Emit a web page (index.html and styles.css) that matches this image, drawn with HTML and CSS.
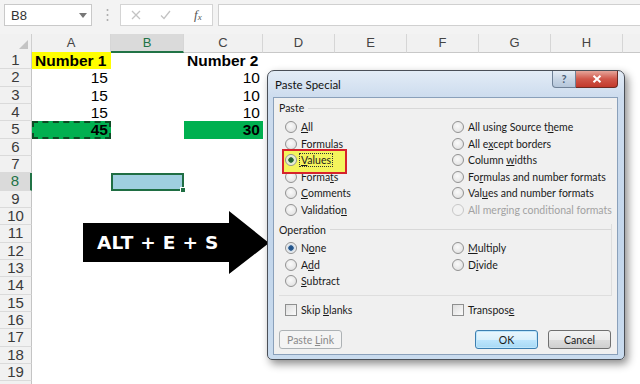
FILE: index.html
```html
<!DOCTYPE html>
<html>
<head>
<meta charset="utf-8">
<title>Paste Special</title>
<link rel="stylesheet" href="styles.css">
</head>
<body>
<div class="app">
  <div class="fbar">
    <div class="namebox"><span>B8</span><svg class="dd" width="8" height="5" viewBox="0 0 8 5"><path d="M0 0h8L4 5z" fill="#777"/></svg></div>
    <div class="grip"><svg width="3" height="14" viewBox="0 0 3 14"><circle cx="1.5" cy="2" r="1" fill="#aaa"/><circle cx="1.5" cy="7" r="1" fill="#aaa"/><circle cx="1.5" cy="12" r="1" fill="#aaa"/></svg></div>
    <div class="fxbox">
      <svg class="ic-x" width="10" height="10" viewBox="0 0 10 10"><path d="M1 1L9 9M9 1L1 9" stroke="#c3c3c3" stroke-width="1.3"/></svg>
      <svg class="ic-ok" width="11" height="10" viewBox="0 0 11 10"><path d="M1 5.5L4 8.5L10 1" stroke="#c3c3c3" stroke-width="1.3" fill="none"/></svg>
      <span class="fx">f<sub>x</sub></span>
    </div>
    <div class="finput"></div>
  </div>

  <div class="sheet">
    <div class="row hdr">
      <div class="corner"><svg width="9" height="9" viewBox="0 0 9 9"><path d="M9 0V9H0z" fill="#c4c4c4"/></svg></div>
      <div class="ch">A</div><div class="ch sel">B</div><div class="ch">C</div><div class="ch">D</div><div class="ch">E</div><div class="ch">F</div><div class="ch">G</div><div class="ch">H</div><div class="ch last"></div>
    </div>
    <div class="row"><div class="rh">1</div><div class="c ca b yellow">Number 1</div><div class="c cc b">Number 2</div></div>
    <div class="row"><div class="rh">2</div><div class="c ca r">15</div><div class="c cc r">10</div></div>
    <div class="row"><div class="rh">3</div><div class="c ca r">15</div><div class="c cc r">10</div></div>
    <div class="row"><div class="rh">4</div><div class="c ca r">15</div><div class="c cc r">10</div></div>
    <div class="row"><div class="rh">5</div><div class="c ca r b green ants">45</div><div class="c cc r b green">30</div></div>
    <div class="row"><div class="rh">6</div></div>
    <div class="row"><div class="rh">7</div></div>
    <div class="row"><div class="rh sel">8</div><div class="c cb active"><span class="handle"></span></div></div>
    <div class="row"><div class="rh">9</div></div>
    <div class="row"><div class="rh">10</div></div>
    <div class="row"><div class="rh">11</div></div>
    <div class="row"><div class="rh">12</div></div>
    <div class="row"><div class="rh">13</div></div>
    <div class="row"><div class="rh">14</div></div>
    <div class="row"><div class="rh">15</div></div>
    <div class="row"><div class="rh">16</div></div>
    <div class="row"><div class="rh">17</div></div>
    <div class="row"><div class="rh">18</div></div>
    <div class="row"><div class="rh">19</div></div>
    <div class="row"><div class="rh"></div></div>
  </div>

  <div class="arrow">
    <svg class="arrow-shape" width="186" height="63" viewBox="0 0 186 63"><path d="M0 12H146V0L186 32L146 63V51H0z" fill="#000"/></svg>
    <span class="arrow-text">ALT + E + S</span>
  </div>

  <div class="dlg">
    <div class="titlebar">
      <span class="ttl">Paste Special</span>
      <div class="tbtns">
        <div class="tb-help">?</div>
        <div class="tb-close"><svg width="10" height="8" viewBox="0 0 10 8"><path d="M1.5 0.8L8.5 7.2M8.5 0.8L1.5 7.2" stroke="#fff" stroke-width="2"/></svg></div>
      </div>
    </div>
    <div class="client">
      <div class="gh"><span>Paste</span><i class="gl"></i></div>
      <div class="opts six">
        <label class="opt"><span class="rad"></span><span><u>A</u>ll</span></label>
        <label class="opt"><span class="rad"></span><span>All using Source t<u>h</u>eme</span></label>
        <label class="opt"><span class="rad"></span><span><u>F</u>ormulas</span></label>
        <label class="opt"><span class="rad"></span><span>All e<u>x</u>cept borders</span></label>
        <label class="opt hl"><span class="rad on green-dot"></span><span class="focus"><u>V</u>alues</span></label>
        <label class="opt"><span class="rad"></span><span>Column <u>w</u>idths</span></label>
        <label class="opt"><span class="rad"></span><span>Forma<u>t</u>s</span></label>
        <label class="opt"><span class="rad"></span><span>Fo<u>r</u>mulas and number formats</span></label>
        <label class="opt"><span class="rad"></span><span><u>C</u>omments</span></label>
        <label class="opt"><span class="rad"></span><span>Val<u>u</u>es and number formats</span></label>
        <label class="opt"><span class="rad"></span><span>Validatio<u>n</u></span></label>
        <label class="opt dis"><span class="rad"></span><span>All mer<u>g</u>ing conditional formats</span></label>
      </div>
      <div class="opgrp">
        <div class="gh"><span>Operation</span><i class="gl"></i></div>
        <div class="opts three">
          <label class="opt"><span class="rad on"></span><span>N<u>o</u>ne</span></label>
          <label class="opt"><span class="rad"></span><span><u>M</u>ultiply</span></label>
          <label class="opt"><span class="rad"></span><span>A<u>d</u>d</span></label>
          <label class="opt"><span class="rad"></span><span>D<u>i</u>vide</span></label>
          <label class="opt"><span class="rad"></span><span><u>S</u>ubtract</span></label>
        </div>
      </div>
      <div class="opts checks">
        <label class="opt"><span class="chk"></span><span>Skip <u>b</u>lanks</span></label>
        <label class="opt"><span class="chk"></span><span>Transpos<u>e</u></span></label>
      </div>
      <div class="btns">
        <button class="btn disabled">Paste <u>L</u>ink</button>
        <button class="btn default">OK</button>
        <button class="btn">Cancel</button>
      </div>
    </div>
  </div>
</div>
</body>
</html>
```

FILE: styles.css
```css
* { box-sizing: border-box; margin: 0; padding: 0; }
html, body { width: 640px; height: 384px; overflow: hidden; background: #fff; }
body { font-family: "Liberation Sans", Arial, sans-serif; color: #000; }
.app { position: relative; width: 640px; height: 384px; overflow: hidden; }

/* formula bar */
.fbar { height: 34px; background: #f3f3f3; display: flex; align-items: flex-start; padding: 4px 0 0 4px; }
.namebox { width: 88px; height: 22px; background: #fff; border: 1px solid #c9c9c9; display: flex; align-items: center; justify-content: space-between; padding: 0 4px 0 6px; font-size: 13px; color: #333; }
.grip { width: 28px; height: 22px; display: flex; align-items: center; justify-content: center; padding-left: 2px; }
.fxbox { width: 93px; height: 22px; background: #fff; border: 1px solid #d4d4d4; display: flex; align-items: center; padding-left: 10px; }
.ic-x { margin-right: 19px; }
.ic-ok { margin-right: 23px; }
.fx { font-family: "Liberation Serif", serif; font-style: italic; font-size: 13px; color: #555; }
.fx sub { font-size: 9px; vertical-align: -1px; }
.finput { flex: 1; height: 22px; background: #fff; border: 1px solid #d0d0d0; border-right: none; margin-left: 5px; }

/* sheet */
.sheet { display: flex; flex-direction: column; }
.row { display: grid; grid-template-columns: 32px 79px 73px 79px 72px 72px 72px 72px 72px 1fr; height: 17.33px; }
.row.hdr { height: 18px; }
.corner { background: #f1f1f1; border-right: 1px solid #cfcfcf; border-bottom: 1px solid #c8c8c8; display: flex; align-items: flex-end; justify-content: flex-end; padding: 0 3px 3px 0; }
.ch { background: #f1f1f1; border-right: 1px solid #d6d6d6; border-bottom: 1px solid #c8c8c8; font-size: 13px; line-height: 17px; text-align: center; color: #444; }
.ch.sel { background: #dadada; border-bottom: 2px solid #217346; color: #217346; }
.ch.last { border-right: none; }
.rh { grid-column: 1; background: #f1f1f1; border-right: 1px solid #c4c4c4; border-bottom: 1px solid #dadada; font-size: 15px; line-height: 16px; text-align: center; color: #3a3a3a; }
.rh.sel { background: #dadada; border-right: 2px solid #217346; color: #217346; }
.c { font-size: 15.5px; line-height: 17px; padding: 0 3px; white-space: nowrap; }
.ca { grid-column: 2; }
.cb { grid-column: 3; }
.cc { grid-column: 4; }
.r { text-align: right; }
.b { font-weight: bold; }
.yellow { background: #ffff00; }
.green { background: #00b050; }
.ants { border: 2px dashed #0d4a24; line-height: 13px; padding-right: 1px; }
.active { background: #9fcfe0; border: 2px solid #1f6e43; position: relative; }
.handle { position: absolute; right: -4px; bottom: -4px; width: 6px; height: 6px; background: #1f6e43; border: 1px solid #fff; }

/* arrow */
.arrow { position: absolute; left: 83px; top: 211px; width: 186px; height: 63px; }
.arrow-shape { display: block; }
.arrow-text { position: absolute; left: 14px; top: 21px; font-family: "DejaVu Sans", Verdana, sans-serif; font-weight: bold; font-size: 18.5px; letter-spacing: 0.3px; line-height: 22px; color: #fff; white-space: nowrap; }

/* dialog */
.dlg { position: absolute; left: 267px; top: 70px; width: 358px; height: 290px; border: 1px solid #4a4f57; border-radius: 7px 7px 5px 5px; background: linear-gradient(#e3ecf6, #cddcee 26px, #c3d6eb 60%, #c9dbee); box-shadow: 3px 4px 8px rgba(0,0,0,.45); padding: 0 6px 4px 5px; display: flex; flex-direction: column; font-family: Lato, "Open Sans", sans-serif; }
.titlebar { height: 26px; display: flex; justify-content: space-between; align-items: flex-start; }
.ttl { font-size: 11.5px; line-height: 14px; padding: 7px 0 0 2px; color: #111; }
.tbtns { display: flex; }
.tb-help { width: 24px; height: 17px; border: 1px solid #6f8197; border-top: none; border-radius: 0 0 0 4px; background: linear-gradient(#e4ecf5, #c6d4e4 55%, #b5c6da); color: #4b5d74; font-size: 11px; font-weight: bold; text-align: center; line-height: 15px; }
.tb-close { width: 42px; height: 17px; border: 1px solid #6d2a22; border-left: none; border-top: none; border-radius: 0 0 4px 0; background: linear-gradient(#e6a59a, #d0574a 50%, #c2392b); display: flex; align-items: center; justify-content: center; }
.client { flex: 1; background: #f0f0f0; border: 1px solid #8aa0ba; padding: 4px 5px 0 5px; font-size: 10.5px; color: #1a1a1a; display: flex; flex-direction: column; }
.gh { height: 12px; display: flex; align-items: center; gap: 4px; line-height: 12px; }
.gl { flex: 1; height: 1px; background: #d8d8d8; }
.opts { display: grid; grid-template-columns: 167px 1fr; grid-auto-rows: 16.6px; padding-left: 6px; }
.opts.six { margin-top: 4.7px; }
.opts.three { margin-top: 3.7px; }
.opgrp { margin-top: 5.7px; border-right: 1px solid #dedede; border-bottom: 1px solid #dedede; padding-bottom: 6px; }
.opt { display: flex; align-items: center; gap: 4px; white-space: nowrap; }
.opt u { text-decoration: underline; text-underline-offset: 1px; }
.rad { width: 12px; height: 12px; border-radius: 50%; border: 1px solid #929292; background: radial-gradient(circle at 45% 40%, #fafafa, #dcdcdc); flex: none; }
.rad.on { background: radial-gradient(circle, #1e4f86 0, #2b5d93 2.4px, #cfdbe6 3px, #f4f4f4 5px); }
.rad.on.green-dot { background: radial-gradient(circle, #1f5a2a 0, #2c6b34 2.4px, #d9e6c8 3px, #f3f3e0 5px); }
.dis { color: #a2a2a2; }
.dis .rad { border-color: #c7c7c7; background: #f2f2f2; }
.hl { position: relative; }
.hl::before { content: ""; position: absolute; left: -3px; top: -2.5px; width: 61px; height: 21px; border: 2px solid #d6222b; background: #f4f45c; }
.hl > span { position: relative; }
.focus { outline: 1px dotted #333; padding: 0 1px; margin-left: -1px; }
.checks { margin-top: 5.7px; padding-left: 6px; }
.chk { width: 12px; height: 12px; border: 1px solid #8e8f8f; background: linear-gradient(135deg, #dedede, #fafafa); flex: none; }
.btns { display: flex; margin-top: 11.7px; gap: 10px; padding-right: 1px; }
.btn { width: 63px; height: 19px; border: 1px solid #707070; border-radius: 3px; background: linear-gradient(#f3f3f3, #ebebeb 50%, #dddddd 51%, #cfcfcf); font-family: Lato, "Open Sans", sans-serif; font-size: 10.5px; color: #1a1a1a; }
.btn.disabled { background: #f4f4f4; border-color: #adb2b5; color: #8a8a8a; margin-right: auto; }
.btn.default { border-color: #3c7fb1; box-shadow: inset 0 0 0 1px #bfe6fb; background: linear-gradient(#eaf6fd, #d9f0fc 50%, #bee6fd 51%, #a7d9f5); }
.btn u { text-decoration: underline; }
```
